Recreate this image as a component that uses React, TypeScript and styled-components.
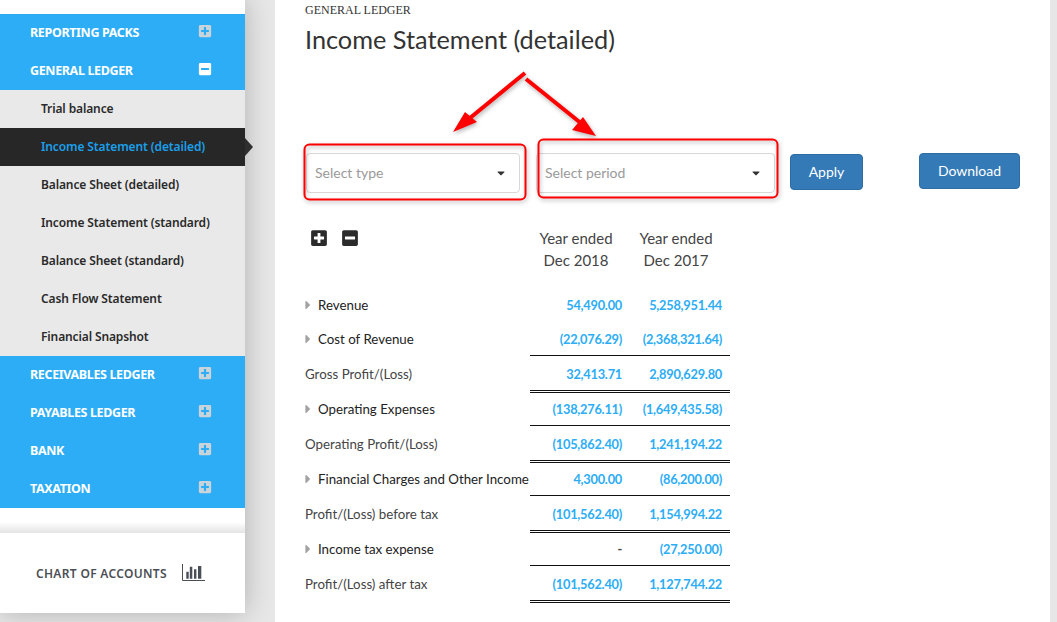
import React from "react";
import styled, { createGlobalStyle } from "styled-components";
import { FaPlusSquare, FaMinusSquare, FaCaretDown, FaCaretRight } from "react-icons/fa";

const Global = createGlobalStyle`
  html, body { margin: 0; padding: 0; height: 622px; overflow: hidden; background: #e7e7e7; }
  * { box-sizing: border-box; }
  body { font-family: "Noto Sans", "Open Sans", sans-serif; }
`;

const Page = styled.div`
  position: relative;
  display: flex;
  width: 1057px;
  height: 622px;
  overflow: hidden;
`;

const Sidebar = styled.aside`
  width: 245px;
  height: 613px;
  flex: none;
  display: flex;
  flex-direction: column;
  background: #fff;
  box-shadow: 0 0 26px rgba(0, 0, 0, 0.24);
  padding-top: 14px;
`;

const Section = styled.div`
  height: 38px;
  flex: none;
  background: #2cadf6;
  display: flex;
  align-items: center;
  justify-content: space-between;
  padding: 0 33px 0 30px;
  color: #fff;
  font: 700 12.5px/38px "Noto Sans", sans-serif;
  letter-spacing: -0.36px;
`;

const SectionIcon = styled.span<{ $open?: boolean }>`
  display: flex;
  font-size: 14px;
  margin-top: -5px;
  color: ${(p) => (p.$open ? "#fff" : "#c9d3da")};
`;

const SubItem = styled.div<{ $active?: boolean }>`
  position: relative;
  height: 38px;
  flex: none;
  padding-left: 41px;
  background: ${(p) => (p.$active ? "#272727" : "#e9e9e9")};
  color: ${(p) => (p.$active ? "#1a9fea" : "#2a2a2a")};
  font: 600 12px/38px "Noto Sans", sans-serif;
  letter-spacing: -0.12px;
`;

const ActiveNotch = styled.span`
  position: absolute;
  left: 245px;
  top: 10px;
  border-left: 8px solid #2f2f2f;
  border-top: 9px solid transparent;
  border-bottom: 9px solid transparent;
`;

const SidebarGap = styled.div`
  height: 25px;
  flex: none;
  background: linear-gradient(to bottom, #fff 55%, #e4e4e4 100%);
`;

const ChartLink = styled.div`
  flex: 1;
  display: flex;
  align-items: center;
  gap: 15px;
  padding-left: 36px;
  color: #4b4f55;
  font: 600 12px "Noto Sans", sans-serif;
  letter-spacing: 0.32px;
`;

const Main = styled.main`
  margin-left: 30px;
  width: 775px;
  height: 622px;
  flex: none;
  background: #fff;
  padding: 4px 0 0 30px;
`;

const Eyebrow = styled.div`
  font: 12px/13px "Liberation Serif", serif;
  color: #333;
`;

const Title = styled.h1`
  margin: 6px 0 0;
  font: 400 25.3px/32px "Lato", sans-serif;
  color: #333;
`;

const Filters = styled.div`
  display: flex;
  align-items: flex-start;
  margin-top: 98px;
  padding-left: 1px;
`;

const Select = styled.div<{ $w: number; $mr: number }>`
  width: ${(p) => p.$w}px;
  margin-right: ${(p) => p.$mr}px;
  height: 40px;
  flex: none;
  display: flex;
  align-items: center;
  justify-content: space-between;
  padding: 0 12px 0 8px;
  border: 1px solid #d8d8d8;
  border-radius: 4px;
  color: #9a9a9a;
  font: 400 14px "Lato", sans-serif;
  svg { color: #333; font-size: 12px; }
`;

const Placeholder = styled.span`
  margin-top: -2px;
`;

const Button = styled.div<{ $w: number; $top: number; $mr?: number }>`
  width: ${(p) => p.$w}px;
  margin-top: ${(p) => p.$top}px;
  margin-right: ${(p) => p.$mr ?? 0}px;
  height: 36px;
  flex: none;
  border: 1px solid #2e6da4;
  border-radius: 4px;
  background: #337ab7;
  color: #fff;
  text-align: center;
  font: 400 14px/34px "Lato", sans-serif;
`;

const HeadRow = styled.div`
  display: grid;
  grid-template-columns: 225px 100px 100px;
  margin-top: 25px;
  height: 69px;
`;

const TreeTools = styled.div`
  display: flex;
  gap: 13px;
  padding: 11px 0 0 5px;
  font-size: 18px;
  color: #2b2b2b;
`;

const HeadCell = styled.div`
  text-align: center;
  font: 400 15px/22px "Lato", sans-serif;
  color: #444;
  padding: 9px 8px 0 0;
`;

const Row = styled.div`
  display: grid;
  grid-template-columns: 225px 100px 100px;
`;

const Label = styled.div<{ $h: number; $sub?: boolean; $up: number; $down: number }>`
  height: ${(p) => p.$h}px;
  display: flex;
  align-items: center;
  white-space: nowrap;
  padding: ${(p) => p.$down}px 0 ${(p) => p.$up}px;
  font: 400 13.3px "Lato", sans-serif;
  color: ${(p) => (p.$sub ? "#222" : "#444")};
  svg { color: #a3a3a3; width: 6px; height: 14px; margin-right: 7px; flex: none; }
`;

const Amount = styled.div<{ $h: number; $up: number; $down: number; $line?: "single" | "double"; $dash?: boolean }>`
  height: ${(p) => p.$h}px;
  display: flex;
  align-items: center;
  justify-content: flex-end;
  padding: ${(p) => p.$down}px 8px ${(p) => p.$up}px 0;
  color: ${(p) => (p.$dash ? "#444" : "#2cadf6")};
  font: 700 12.8px "Lato", sans-serif;
  letter-spacing: -0.25px;
  border-bottom: ${(p) =>
    p.$line === "single" ? "1px solid #111" : p.$line === "double" ? "3px double #111" : "none"};
`;

const Overlay = styled.svg`
  position: absolute;
  left: 0;
  top: 0;
  pointer-events: none;
  filter: drop-shadow(1px 2px 2px rgba(0, 0, 0, 0.3));
`;

const sections = ["RECEIVABLES LEDGER", "PAYABLES LEDGER", "BANK", "TAXATION"];
const subs = [
  "Trial balance",
  "Income Statement (detailed)",
  "Balance Sheet (detailed)",
  "Income Statement (standard)",
  "Balance Sheet (standard)",
  "Cash Flow Statement",
  "Financial Snapshot",
];

type R = { l: string; a: string; b: string; h: number; sub?: boolean; line?: "single" | "double"; lu: number; ld: number; au: number; ad: number };
const rows: R[] = [
  { l: "Revenue", a: "54,490.00", b: "5,258,951.44", h: 34, sub: true, lu: 0, ld: 2, au: 0, ad: 2 },
  { l: "Cost of Revenue", a: "(22,076.29)", b: "(2,368,321.64)", h: 35, sub: true, line: "single", lu: 0, ld: 0, au: 0, ad: 2 },
  { l: "Gross Profit/(Loss)", a: "32,413.71", b: "2,890,629.80", h: 37, line: "double", lu: 1, ld: 0, au: 0, ad: 2 },
  { l: "Operating Expenses", a: "(138,276.11)", b: "(1,649,435.58)", h: 33, sub: true, line: "single", lu: 1, ld: 0, au: 1, ad: 0 },
  { l: "Operating Profit/(Loss)", a: "(105,862.40)", b: "1,241,194.22", h: 37, line: "double", lu: 1, ld: 0, au: 0, ad: 2 },
  { l: "Financial Charges and Other Income", a: "4,300.00", b: "(86,200.00)", h: 33, sub: true, line: "single", lu: 1, ld: 0, au: 1, ad: 0 },
  { l: "Profit/(Loss) before tax", a: "(101,562.40)", b: "1,154,994.22", h: 37, line: "double", lu: 1, ld: 0, au: 0, ad: 2 },
  { l: "Income tax expense", a: "-", b: "(27,250.00)", h: 33, sub: true, line: "single", lu: 1, ld: 0, au: 1, ad: 0 },
  { l: "Profit/(Loss) after tax", a: "(101,562.40)", b: "1,127,744.22", h: 37, line: "double", lu: 1, ld: 0, au: 0, ad: 2 },
];

const Bars = () => (
  <svg width="23" height="18" viewBox="0 0 23 18">
    <path d="M0.5 0V16.5H23" fill="none" stroke="#4a4f57" strokeWidth="1" />
    <path d="M4.3 7.7h2.4v7H4.3zM7.8 2.7h2.5v12H7.8zM12 5.3h2.4v9.4H12zM16 2h3.3v12.7H16z" fill="#4a4f57" />
  </svg>
);

export default function App() {
  return (
    <Page>
      <Global />
      <Sidebar>
        <Section>
          REPORTING PACKS
          <SectionIcon><FaPlusSquare /></SectionIcon>
        </Section>
        <Section>
          GENERAL LEDGER
          <SectionIcon $open><FaMinusSquare /></SectionIcon>
        </Section>
        {subs.map((s, i) => (
          <SubItem key={s} $active={i === 1}>
            {s}
            {i === 1 && <ActiveNotch />}
          </SubItem>
        ))}
        {sections.map((s) => (
          <Section key={s}>
            {s}
            <SectionIcon><FaPlusSquare /></SectionIcon>
          </Section>
        ))}
        <SidebarGap />
        <ChartLink>
          CHART OF ACCOUNTS
          <Bars />
        </ChartLink>
      </Sidebar>
      <Main>
        <Eyebrow>GENERAL LEDGER</Eyebrow>
        <Title>Income Statement (detailed)</Title>
        <Filters>
          <Select $w={214} $mr={16}>
            <Placeholder>Select type</Placeholder>
            <FaCaretDown />
          </Select>
          <Select $w={239} $mr={15}>
            <Placeholder>Select period</Placeholder>
            <FaCaretDown />
          </Select>
          <Button $w={73} $top={1} $mr={56}>Apply</Button>
          <Button $w={101} $top={0}>Download</Button>
        </Filters>
        <HeadRow>
          <TreeTools>
            <FaPlusSquare />
            <FaMinusSquare />
          </TreeTools>
          <HeadCell>Year ended<br />Dec 2018</HeadCell>
          <HeadCell>Year ended<br />Dec 2017</HeadCell>
        </HeadRow>
        {rows.map((r) => (
          <Row key={r.l}>
            <Label $h={r.h} $sub={r.sub} $up={r.lu} $down={r.ld}>
              {r.sub && <FaCaretRight />}
              {r.l}
            </Label>
            <Amount $h={r.h} $up={r.au} $down={r.ad} $line={r.line} $dash={r.a === "-"}>{r.a}</Amount>
            <Amount $h={r.h} $up={r.au} $down={r.ad} $line={r.line}>{r.b}</Amount>
          </Row>
        ))}
      </Main>
      <Overlay width="1057" height="622" viewBox="0 0 1057 622">
        <g fill="none" stroke="#f00" strokeWidth="2">
          <rect x="304.5" y="144.5" width="221" height="55" rx="5" />
          <rect x="538.5" y="139.5" width="239" height="58" rx="5" />
        </g>
        <g stroke="#f00" strokeWidth="4" fill="#f00">
          <line x1="525" y1="73" x2="470" y2="118" />
          <line x1="526" y1="79" x2="582" y2="124" />
        </g>
        <path d="M453 132L465 112L477 122Z" fill="#f00" />
        <path d="M596 136L572 130L583 117Z" fill="#f00" />
      </Overlay>
    </Page>
  );
}
